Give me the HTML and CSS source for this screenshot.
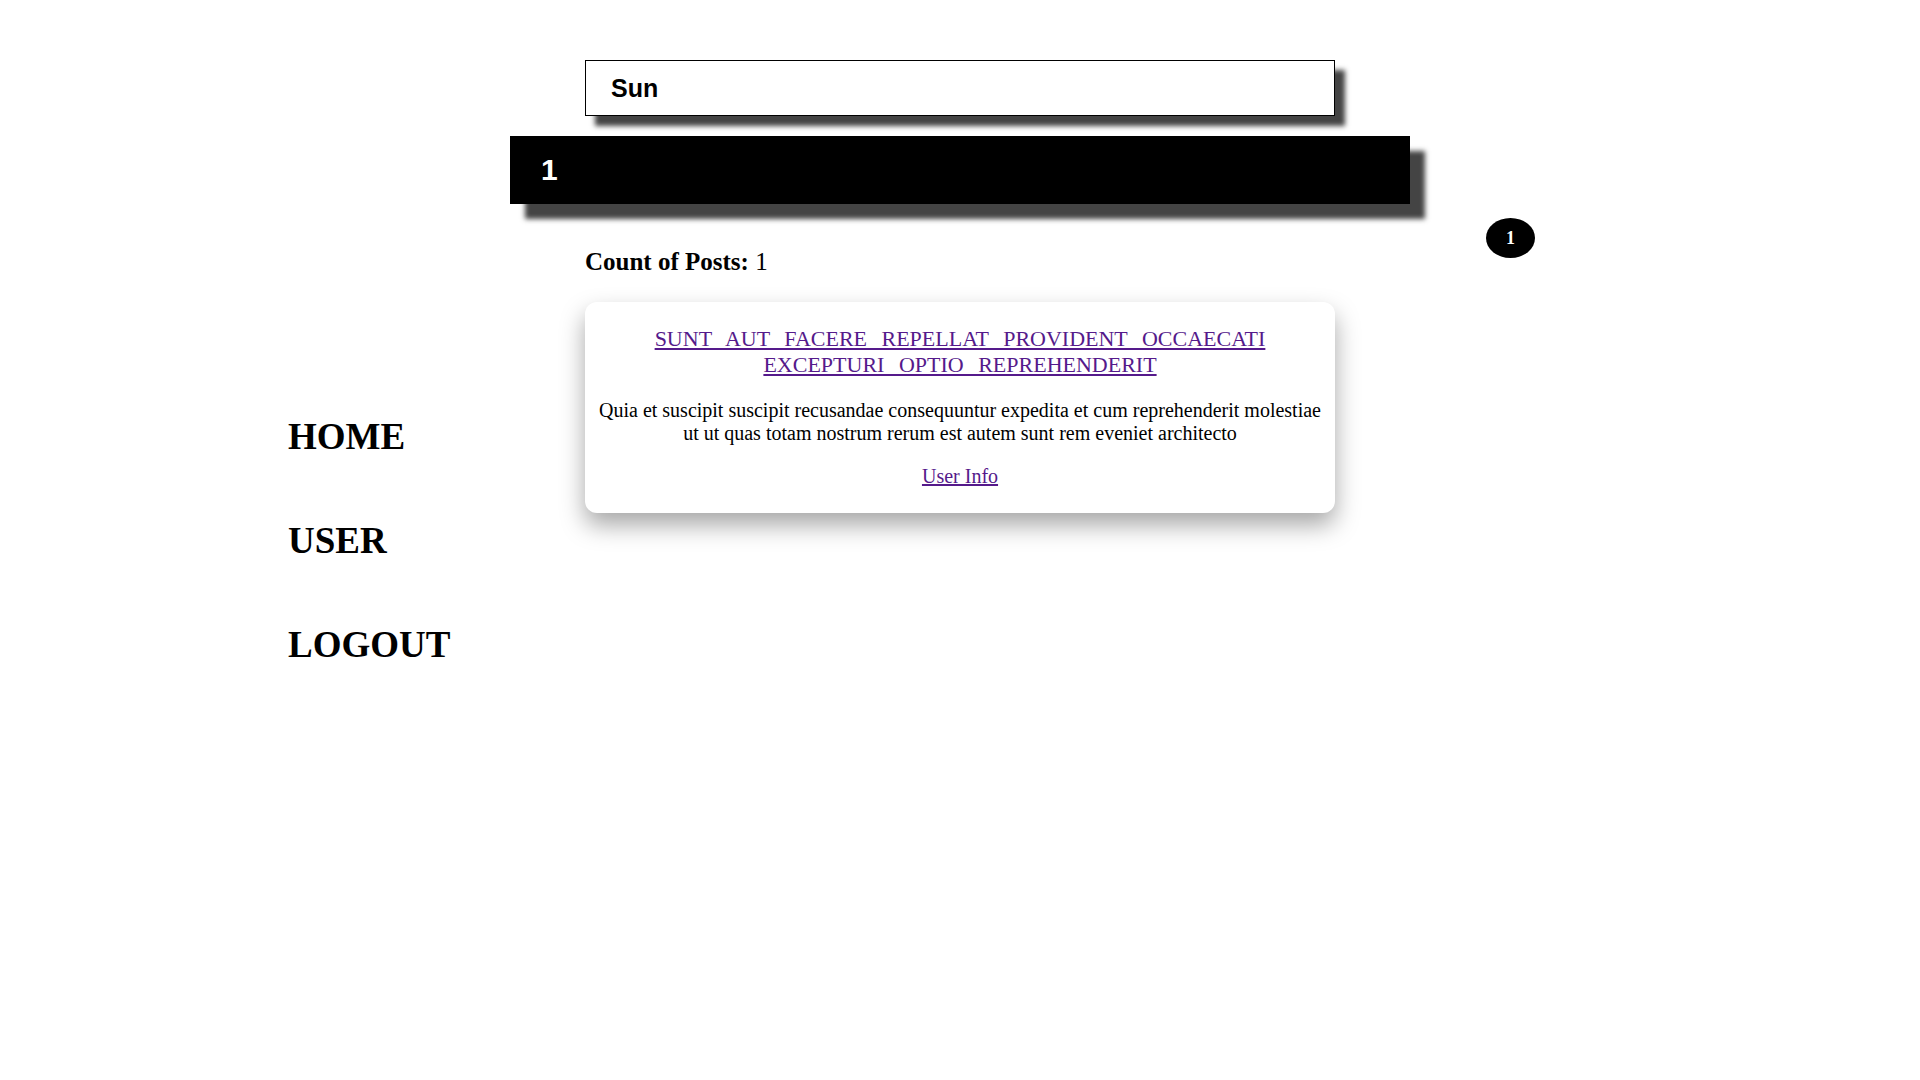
FILE: index.html
```html
<!DOCTYPE html>
<html lang="en">
<head>
<meta charset="utf-8">
<title>Posts</title>
<link rel="stylesheet" href="styles.css">
</head>
<body>
<div class="page">
  <nav class="sidenav">
    <a class="nav-link" href="#">HOME</a>
    <a class="nav-link" href="#">USER</a>
    <a class="nav-link" href="#">LOGOUT</a>
  </nav>
  <main class="main">
    <input class="search" type="text" value="Sun">
    <div class="bar">1</div>
    <p class="count"><strong>Count of Posts:</strong> 1</p>
    <article class="card">
      <a class="card-title" href="#">sunt aut facere repellat provident occaecati excepturi optio reprehenderit</a>
      <p class="card-body">Quia et suscipit suscipit recusandae consequuntur expedita et cum reprehenderit molestiae ut ut quas totam nostrum rerum est autem sunt rem eveniet architecto</p>
      <a class="card-link" href="#">User Info</a>
    </article>
  </main>
  <aside class="side">
    <span class="badge">1</span>
  </aside>
</div>
</body>
</html>
```

FILE: styles.css
```css
html, body {
  margin: 0;
  padding: 0;
  background: #fff;
}

body {
  font-family: "Liberation Serif", "Times New Roman", serif;
  color: #000;
}

.page {
  display: grid;
  grid-template-columns: 1fr 900px 1fr;
  min-height: 100vh;
}

.sidenav {
  align-self: center;
  display: flex;
  flex-direction: column;
  gap: 61px;
  padding-left: 288px;
}

.nav-link {
  font-size: 37px;
  font-weight: bold;
  color: #000;
  text-decoration: none;
}

.main {
  display: flex;
  flex-direction: column;
  align-items: center;
  padding-top: 60px;
}

.search {
  box-sizing: border-box;
  width: 750px;
  height: 56px;
  margin: 0;
  border: 1px solid #000;
  padding: 0 0 0 25px;
  font-family: "Liberation Sans", Arial, sans-serif;
  font-size: 25px;
  font-weight: bold;
  color: #000;
  background: #fff;
  outline: none;
  box-shadow: 10px 10px 5px #444;
}

.bar {
  box-sizing: border-box;
  width: 900px;
  height: 68px;
  margin-top: 20px;
  display: flex;
  align-items: center;
  padding-left: 31px;
  background: #000;
  color: #fff;
  font-family: "Liberation Sans", Arial, sans-serif;
  font-size: 30px;
  font-weight: bold;
  box-shadow: 15px 15px 5px #444;
}

.count {
  width: 750px;
  margin: 44px 0 0;
  font-size: 25px;
  line-height: 27px;
}

.card {
  box-sizing: border-box;
  width: 750px;
  margin-top: 27px;
  padding: 24px 12px 0;
  height: 211px;
  background: #fff;
  border-radius: 12px;
  box-shadow: 0 12px 24px rgba(0, 0, 0, 0.35);
  text-align: center;
  display: flex;
  flex-direction: column;
  align-items: center;
}

.card-title {
  font-size: 22px;
  text-transform: uppercase;
  word-spacing: 9px;
  color: #551a8b;
}

.card-body {
  margin: 21px 0 0;
  font-size: 20px;
  line-height: 23px;
}

.card-link {
  margin-top: 20px;
  font-size: 20px;
  color: #551a8b;
}

.side {
  align-self: start;
  padding: 218px 0 0 76px;
}

.badge {
  display: flex;
  align-items: center;
  justify-content: center;
  width: 49px;
  height: 40px;
  border-radius: 50%;
  background: #000;
  color: #fff;
  font-size: 18px;
  font-weight: bold;
}
```
